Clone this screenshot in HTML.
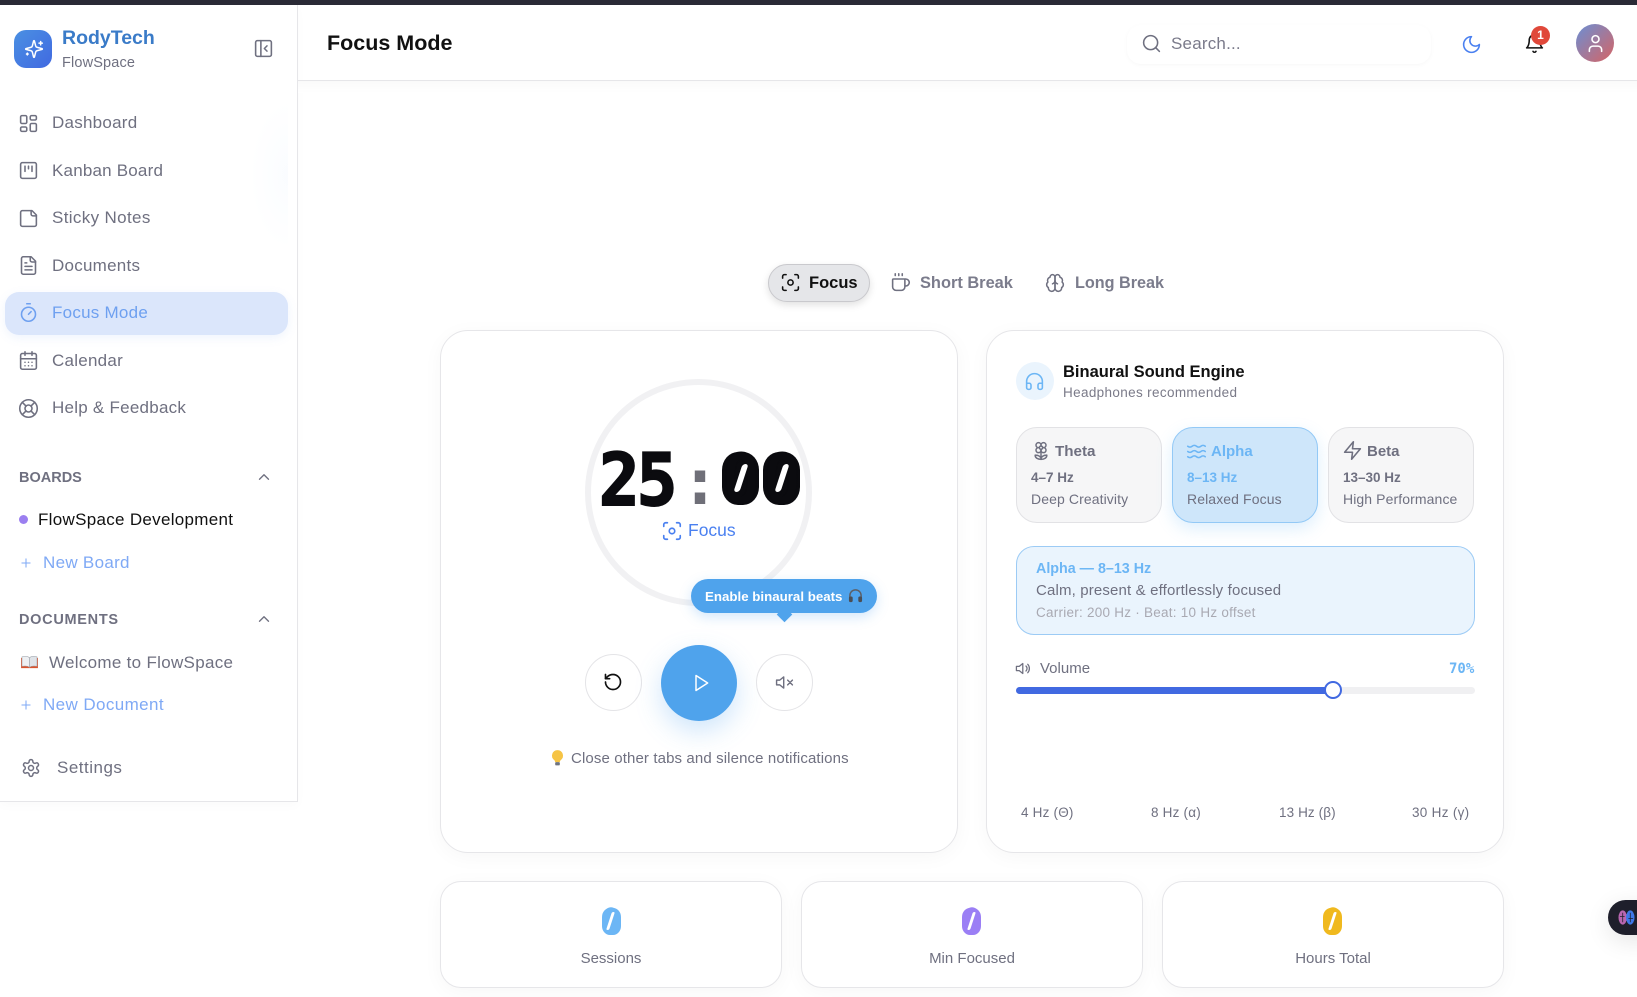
<!DOCTYPE html>
<html lang="en"><head><meta charset="utf-8"><title>Focus Mode</title>
<style>
*{box-sizing:border-box}
html,body{margin:0;padding:0;width:1637px;height:997px;overflow:hidden;background:#fff;font-family:"Liberation Sans",Arial,sans-serif}
.a,.t,svg.i{position:absolute}
.t{white-space:nowrap;line-height:20px;height:20px;color:#6f7080;margin-top:1px}
svg.i{fill:none;stroke:currentColor;stroke-width:1.8;stroke-linecap:round;stroke-linejoin:round;color:#6f7080}
.nav{font-size:17px;letter-spacing:.25px}
.sec{font-size:14.5px;font-weight:700;letter-spacing:.7px}
.card{position:absolute;background:#fff;border:1.5px solid #e6e6e9;box-shadow:0 4px 20px rgba(0,0,0,.035)}
.mode{position:absolute;top:427px;width:146px;height:96px;border-radius:21px;background:#f6f6f7;border:1.5px solid #e2e2e5}
.mono{font-family:"DejaVu Sans Mono","Liberation Mono",monospace;font-weight:700}
.c{text-align:center}
.sl{position:absolute;background:#fff;transform:skewX(-18deg)}
.z{position:absolute;top:452px;width:37px;height:53px;border-radius:16px/18px;background:#0b0b0f}
.sz{position:absolute;top:907.5px;width:19px;height:27px;border-radius:8px/9px}
.stat0{top:906px;width:342px;height:30px;line-height:30px;font-size:35px;transform:scaleX(.9)}
</style></head><body>
<div class="a" style="left:0;top:0;width:1637px;height:5px;background:#2a2a36"></div>

<!-- sidebar -->
<div class="a" style="left:0;top:5px;width:298px;height:797px;background:#fff;border-right:1.5px solid #e6e6e9;border-bottom:1.5px solid #e6e6e9;box-shadow:0 4px 10px rgba(0,0,0,.02)"></div>
<div class="a" style="left:250px;top:100px;width:38px;height:150px;background:radial-gradient(ellipse at 100% 50%,rgba(190,220,250,.08),rgba(190,220,250,0) 70%)"></div>
<div class="a" style="left:14px;top:30px;width:38px;height:38px;border-radius:12px;background:linear-gradient(135deg,#4a90e2,#4169e1)"></div>
<svg class="i" viewBox="0 0 24 24" style="left:24px;top:39px;width:20px;height:20px;color:#fff"><path d="M9.937 15.5A2 2 0 0 0 8.5 14.063l-6.135-1.582a.5.5 0 0 1 0-.962L8.5 9.936A2 2 0 0 0 9.937 8.5l1.582-6.135a.5.5 0 0 1 .963 0L14.063 8.5A2 2 0 0 0 15.5 9.937l6.135 1.581a.5.5 0 0 1 0 .964L15.5 14.063a2 2 0 0 0-1.437 1.437l-1.582 6.135a.5.5 0 0 1-.963 0zM20 3v4M22 5h-4M4 17v2M5 18H3"/></svg>
<div class="t" style="left:62px;top:27px;font-size:19.5px;font-weight:700;color:#3a7bc8">RodyTech</div>
<div class="t" style="left:62px;top:52px;font-size:14.5px;letter-spacing:.15px">FlowSpace</div>
<svg class="i" viewBox="0 0 24 24" style="left:253px;top:38px;width:21px;height:21px"><rect x="3" y="3" width="18" height="18" rx="2"/><path d="M9 3v18M16 15l-3-3 3-3"/></svg>

<svg class="i" viewBox="0 0 24 24" style="left:18px;top:113px;width:21px;height:21px"><rect x="3" y="3" width="7" height="9" rx="1.500"/><rect x="14" y="3" width="7" height="5" rx="1.500"/><rect x="14" y="12" width="7" height="9" rx="1.500"/><rect x="3" y="16" width="7" height="5" rx="1.500"/></svg>
<div class="t nav" style="left:52px;top:112px">Dashboard</div>
<svg class="i" viewBox="0 0 24 24" style="left:18px;top:160px;width:21px;height:21px"><rect x="3" y="3" width="18" height="18" rx="2"/><path d="M8 7v6M12 7v3M16 7v6"/></svg>
<div class="t nav" style="left:52px;top:160px;letter-spacing:.2px">Kanban Board</div>
<svg class="i" viewBox="0 0 24 24" style="left:18px;top:208px;width:21px;height:21px"><path d="M16 3H5a2 2 0 0 0-2 2v14a2 2 0 0 0 2 2h14a2 2 0 0 0 2-2V8Z"/><path d="M15 3v4a2 2 0 0 0 2 2h4"/></svg>
<div class="t nav" style="left:52px;top:207px;letter-spacing:.35px">Sticky Notes</div>
<svg class="i" viewBox="0 0 24 24" style="left:18px;top:255px;width:21px;height:21px"><path d="M15 2H6a2 2 0 0 0-2 2v16a2 2 0 0 0 2 2h12a2 2 0 0 0 2-2V7Z"/><path d="M14 2v4a2 2 0 0 0 2 2h4M10 9H8M16 13H8M16 17H8"/></svg>
<div class="t nav" style="left:52px;top:255px">Documents</div>
<div class="a" style="left:5px;top:292px;width:283px;height:43px;border-radius:14px;background:#dbe6fb;box-shadow:0 3px 10px rgba(100,150,240,.1)"></div>
<svg class="i" viewBox="0 0 24 24" style="left:18px;top:302px;width:21px;height:21px;color:#6ea0f0"><path d="M10 2h4M12 14l3-3"/><circle cx="12" cy="14" r="8"/></svg>
<div class="t nav" style="left:52px;top:302px;color:#6ea0f0">Focus Mode</div>
<svg class="i" viewBox="0 0 24 24" style="left:18px;top:350px;width:21px;height:21px"><path d="M8 2v4M16 2v4"/><rect x="3" y="4" width="18" height="18" rx="2"/><path d="M3 10h18M8 14h.01M12 14h.01M16 14h.01M8 18h.01M12 18h.01M16 18h.01"/></svg>
<div class="t nav" style="left:52px;top:350px">Calendar</div>
<svg class="i" viewBox="0 0 24 24" style="left:18px;top:398px;width:21px;height:21px"><circle cx="12" cy="12" r="10"/><path d="M4.93 4.93l4.24 4.24M14.83 9.17l4.24-4.24M14.83 14.83l4.24 4.24M9.17 14.83l-4.24 4.24"/><circle cx="12" cy="12" r="4"/></svg>
<div class="t nav" style="left:52px;top:397px">Help &amp; Feedback</div>

<div class="t sec" style="left:19px;top:467px;letter-spacing:0">BOARDS</div>
<svg class="i" viewBox="0 0 24 24" style="left:255px;top:468px;width:18px;height:18px"><path d="M18 15l-6-6-6 6"/></svg>
<div class="a" style="left:19px;top:515px;width:9px;height:9px;border-radius:50%;background:#9b7ff0"></div>
<div class="t nav" style="left:38px;top:509px;color:#111;letter-spacing:.3px">FlowSpace Development</div>
<svg class="i" viewBox="0 0 24 24" style="left:19px;top:556px;width:14px;height:14px;color:#7fa9f5"><path d="M5 12h14M12 5v14"/></svg>
<div class="t nav" style="left:43px;top:552px;color:#7fa9f5;letter-spacing:.3px">New Board</div>
<div class="t sec" style="left:19px;top:609px">DOCUMENTS</div>
<svg class="i" viewBox="0 0 24 24" style="left:255px;top:610px;width:18px;height:18px"><path d="M18 15l-6-6-6 6"/></svg>
<svg class="a" viewBox="0 0 20 16" style="left:20px;top:655px;width:19px;height:15px"><path d="M1 3h18v11H1z" fill="#d9542f"/><path d="M2 2c3-1 6-1 8 1v10c-2-1.500-5-1.500-8-1z" fill="#eef0f3" stroke="#9aa0a8" stroke-width=".6"/><path d="M18 2c-3-1-6-1-8 1v10c2-1.500 5-1.500 8-1z" fill="#dfe3e8" stroke="#9aa0a8" stroke-width=".6"/></svg>
<div class="t nav" style="left:49px;top:652px;letter-spacing:.3px">Welcome to FlowSpace</div>
<svg class="i" viewBox="0 0 24 24" style="left:19px;top:698px;width:14px;height:14px;color:#7fa9f5"><path d="M5 12h14M12 5v14"/></svg>
<div class="t nav" style="left:43px;top:694px;color:#7fa9f5;letter-spacing:.4px">New Document</div>
<svg class="i" viewBox="0 0 24 24" style="left:20.500px;top:757.500px;width:20px;height:20px"><path d="M12.22 2h-.44a2 2 0 0 0-2 2v.18a2 2 0 0 1-1 1.730l-.43.25a2 2 0 0 1-2 0l-.15-.08a2 2 0 0 0-2.730.73l-.22.38a2 2 0 0 0 .73 2.730l.15.1a2 2 0 0 1 1 1.720v.51a2 2 0 0 1-1 1.740l-.15.09a2 2 0 0 0-.73 2.730l.22.38a2 2 0 0 0 2.730.73l.15-.08a2 2 0 0 1 2 0l.43.25a2 2 0 0 1 1 1.730V20a2 2 0 0 0 2 2h.44a2 2 0 0 0 2-2v-.18a2 2 0 0 1 1-1.730l.43-.25a2 2 0 0 1 2 0l.15.08a2 2 0 0 0 2.730-.73l.22-.39a2 2 0 0 0-.73-2.730l-.15-.08a2 2 0 0 1-1-1.740v-.5a2 2 0 0 1 1-1.740l.15-.09a2 2 0 0 0 .73-2.730l-.22-.38a2 2 0 0 0-2.730-.73l-.15.08a2 2 0 0 1-2 0l-.43-.25a2 2 0 0 1-1-1.730V4a2 2 0 0 0-2-2z"/><circle cx="12" cy="12" r="3"/></svg>
<div class="t nav" style="left:57px;top:757px;letter-spacing:.5px">Settings</div>

<!-- header -->
<div class="a" style="left:298px;top:80px;width:1339px;height:1.500px;background:#e6e6e9"></div>
<div class="a" style="left:298px;top:81px;width:1339px;height:12px;background:linear-gradient(#fafafa,#fff)"></div>
<div class="t" style="left:327px;top:31.500px;font-size:21.5px;font-weight:700;color:#111">Focus Mode</div>
<div class="a" style="left:1127px;top:25px;width:304px;height:39px;border-radius:14px;background:#fff;box-shadow:0 1px 4px rgba(0,0,0,.035)"></div>
<svg class="i" viewBox="0 0 24 24" style="left:1140.500px;top:33px;width:21px;height:21px"><circle cx="11" cy="11" r="8"/><path d="M21 21l-4.300-4.300"/></svg>
<div class="t" style="left:1171px;top:33px;font-size:17px;color:#7a7a8a;letter-spacing:.2px">Search...</div>
<svg class="i" viewBox="0 0 24 24" style="left:1461px;top:33.500px;width:21px;height:21px;color:#4a80f0"><path d="M12 3a6 6 0 0 0 9 9 9 9 0 1 1-9-9Z"/></svg>
<svg class="i" viewBox="0 0 24 24" style="left:1523.500px;top:32.500px;width:21px;height:21px;color:#111"><path d="M6 8a6 6 0 0 1 12 0c0 7 3 9 3 9H3s3-2 3-9"/><path d="M10.300 21a1.940 1.940 0 0 0 3.400 0"/></svg>
<div class="a" style="left:1531px;top:26px;width:19px;height:19px;border-radius:50%;background:#e0483a;color:#fff;font-size:12px;font-weight:700;line-height:19px;text-align:center">1</div>
<div class="a" style="left:1576px;top:24px;width:38px;height:38px;border-radius:50%;background:linear-gradient(135deg,#6b8fd4,#d66464)"></div>
<svg class="i" viewBox="0 0 24 24" style="left:1585px;top:33px;width:21px;height:21px;color:#fff"><path d="M19 21v-2a4 4 0 0 0-4-4H9a4 4 0 0 0-4 4v2"/><circle cx="12" cy="7" r="4"/></svg>

<!-- tabs -->
<div class="a" style="left:768px;top:264px;width:102px;height:38px;border-radius:19px;background:#e5e6e9;border:1px solid #c9c9cd;box-shadow:0 3px 8px rgba(0,0,0,.12)"></div>
<svg class="i" viewBox="0 0 24 24" style="left:780px;top:272px;width:21px;height:21px;color:#111"><circle cx="12" cy="12" r="3"/><path d="M3 7V5a2 2 0 0 1 2-2h2M17 3h2a2 2 0 0 1 2 2v2M21 17v2a2 2 0 0 1-2 2h-2M7 21H5a2 2 0 0 1-2-2v-2"/></svg>
<div class="t" style="left:809px;top:272px;font-size:16.5px;font-weight:700;color:#111">Focus</div>
<svg class="i" viewBox="0 0 24 24" style="left:890px;top:272px;width:21px;height:21px"><path d="M10 2v2M14 2v2M16 8a1 1 0 0 1 1 1v8a4 4 0 0 1-4 4H7a4 4 0 0 1-4-4V9a1 1 0 0 1 1-1h14a4 4 0 1 1 0 8h-1M6 2v2"/></svg>
<div class="t" style="left:920px;top:272px;font-size:16.4px;font-weight:700;color:#7b7c8c">Short Break</div>
<svg class="i" viewBox="0 0 24 24" style="left:1045px;top:272.500px;width:20px;height:20px"><path d="M12 5a3 3 0 1 0-5.997.125 4 4 0 0 0-2.526 5.770 4 4 0 0 0 .556 6.588A4 4 0 1 0 12 18Z"/><path d="M12 5a3 3 0 1 1 5.997.125 4 4 0 0 1 2.526 5.770 4 4 0 0 1-.556 6.588A4 4 0 1 1 12 18Z"/><path d="M15 13a4.500 4.500 0 0 1-3-4 4.500 4.500 0 0 1-3 4"/></svg>
<div class="t" style="left:1075px;top:272px;font-size:16.2px;font-weight:700;color:#7b7c8c">Long Break</div>

<!-- left card -->
<div class="card" style="left:440px;top:330px;width:518px;height:523px;border-radius:28px"></div>
<div class="a" style="left:585px;top:379px;width:227px;height:227px;border-radius:50%;border:6px solid #f1f1f3"></div>
<div class="t mono" style="left:599px;top:449px;height:60px;line-height:60px;font-size:72px;color:#0b0b0f;letter-spacing:-3px;-webkit-text-stroke:2px #0b0b0f;transform:scaleX(.935);transform-origin:0 50%">25</div>
<div class="t mono c" style="left:680px;top:452px;width:40px;height:60px;line-height:60px;font-size:64px;color:#6f6f78">:</div>
<div class="z" style="left:722px"></div>
<div class="z" style="left:763px"></div>
<div class="t mono" style="left:721.500px;top:449px;height:60px;line-height:60px;font-size:69px;color:#0b0b0f;letter-spacing:3px;-webkit-text-stroke:1px #0b0b0f;transform:scaleX(.92);transform-origin:0 50%">00</div>
<div class="sl" style="left:737.500px;top:464px;width:5.500px;height:28px;border-radius:3px"></div>
<div class="sl" style="left:778.500px;top:464px;width:5.500px;height:28px;border-radius:3px"></div>
<svg class="i" viewBox="0 0 24 24" style="left:661px;top:520px;width:22px;height:22px;color:#4a80f0"><circle cx="12" cy="12" r="3"/><path d="M3 7V5a2 2 0 0 1 2-2h2M17 3h2a2 2 0 0 1 2 2v2M21 17v2a2 2 0 0 1-2 2h-2M7 21H5a2 2 0 0 1-2-2v-2"/></svg>
<div class="t" style="left:688px;top:519px;font-size:17.5px;color:#4a80f0">Focus</div>

<div class="a" style="left:691px;top:579px;width:186px;height:34px;border-radius:17px;background:#4fa3ec;box-shadow:0 4px 12px rgba(80,160,240,.25)"></div>
<div class="a" style="left:779px;top:609px;width:11px;height:11px;background:#4fa3ec;transform:rotate(45deg)"></div>
<div class="t" style="left:705px;top:586px;font-size:13.3px;font-weight:700;color:#fff">Enable binaural beats</div>
<svg class="a" viewBox="0 0 16 16" style="left:848px;top:588px;width:15px;height:15px"><path d="M2 10V8a6 6 0 0 1 12 0v2" fill="none" stroke="#5c6068" stroke-width="1.600"/><rect x="1" y="9" width="4" height="6" rx="1.500" fill="#4a4e56"/><rect x="11" y="9" width="4" height="6" rx="1.500" fill="#4a4e56"/></svg>

<div class="a" style="left:585px;top:654px;width:57px;height:57px;border-radius:50%;background:#fff;border:1.500px solid #e4e4e7"></div>
<svg class="i" viewBox="0 0 24 24" style="left:603px;top:672px;width:20px;height:20px;color:#111;stroke-width:2"><path d="M3 12a9 9 0 1 0 9-9 9.750 9.750 0 0 0-6.740 2.740L3 8"/><path d="M3 3v5h5"/></svg>
<div class="a" style="left:661px;top:645px;width:76px;height:76px;border-radius:50%;background:#4fa3ec;box-shadow:0 10px 26px rgba(80,160,240,.28)"></div>
<svg class="i" viewBox="0 0 24 24" style="left:691px;top:672.500px;width:20px;height:20px;color:#fff"><path d="M6 3l14 9-14 9z"/></svg>
<div class="a" style="left:756px;top:654px;width:57px;height:57px;border-radius:50%;background:#fff;border:1.500px solid #e4e4e7"></div>
<svg class="i" viewBox="0 0 24 24" style="left:775px;top:673px;width:19px;height:19px"><path d="M11 5L6 9H2v6h4l5 4zM22 9l-6 6M16 9l6 6"/></svg>
<svg class="a" viewBox="0 0 14 18" style="left:551px;top:749px;width:13px;height:17px"><path d="M7 1a6 6 0 0 0-3.500 10.800c.6.5.9 1.200.9 2.200h5.200c0-1 .3-1.700.9-2.200A6 6 0 0 0 7 1z" fill="#f6c445"/><rect x="4.500" y="14" width="5" height="3.500" rx="1" fill="#6e7480"/></svg>
<div class="t" style="left:571px;top:748px;font-size:15px;letter-spacing:.12px">Close other tabs and silence notifications</div>

<!-- right card -->
<div class="card" style="left:986px;top:330px;width:518px;height:523px;border-radius:28px"></div>
<div class="a" style="left:1016px;top:362px;width:38px;height:38px;border-radius:50%;background:#eaf4fd"></div>
<svg class="i" viewBox="0 0 24 24" style="left:1024px;top:371px;width:21px;height:21px;color:#6cb6f5"><path d="M3 14h3a2 2 0 0 1 2 2v3a2 2 0 0 1-2 2H5a2 2 0 0 1-2-2v-7a9 9 0 0 1 18 0v7a2 2 0 0 1-2 2h-1a2 2 0 0 1-2-2v-3a2 2 0 0 1 2-2h3"/></svg>
<div class="t" style="left:1063px;top:361px;font-size:16.5px;font-weight:700;color:#111">Binaural Sound Engine</div>
<div class="t" style="left:1063px;top:382px;font-size:13.5px;letter-spacing:.35px;color:#7a7a88">Headphones recommended</div>

<div class="mode" style="left:1016px"></div>
<div class="mode" style="left:1172px;background:#cee6fa;border-color:#93c9f6;box-shadow:0 6px 16px rgba(100,180,245,.22)"></div>
<div class="mode" style="left:1328px"></div>
<svg class="i" viewBox="0 0 24 24" style="left:1030.500px;top:441px;width:20px;height:20px"><path d="M12 5a3 3 0 1 1 3 3m-3-3a3 3 0 1 0-3 3m3-3v1M9 8a3 3 0 1 0 3 3M9 8h1m5 0a3 3 0 1 1-3 3m3-3h-1m-2 3v-1"/><circle cx="12" cy="8" r="2"/><path d="M12 10v12M12 22c4.200 0 7-1.667 7-5-4.200 0-7 1.667-7 5ZM12 22c-4.200 0-7-1.667-7-5 4.200 0 7 1.667 7 5Z"/></svg>
<div class="t" style="left:1055px;top:441px;font-size:15.2px;font-weight:700">Theta</div>
<div class="t" style="left:1031px;top:467px;font-size:13.5px;font-weight:700">4–7 Hz</div>
<div class="t" style="left:1031px;top:488px;font-size:14px;letter-spacing:.1px">Deep Creativity</div>
<svg class="i" viewBox="0 0 24 24" style="left:1186px;top:440.500px;width:21px;height:21px;color:#6cb6f5"><path d="M2 6c.6.5 1.200 1 2.500 1C7 7 7 5 9.500 5c2.600 0 2.400 2 5 2 2.500 0 2.500-2 5-2 1.300 0 1.900.5 2.500 1M2 12c.6.5 1.200 1 2.500 1 2.500 0 2.500-2 5-2 2.600 0 2.400 2 5 2 2.500 0 2.500-2 5-2 1.300 0 1.900.5 2.500 1M2 18c.6.5 1.200 1 2.500 1 2.500 0 2.500-2 5-2 2.600 0 2.400 2 5 2 2.500 0 2.500-2 5-2 1.300 0 1.900.5 2.500 1"/></svg>
<div class="t" style="left:1211px;top:441px;font-size:15px;font-weight:700;color:#6cb6f5">Alpha</div>
<div class="t" style="left:1187px;top:467px;font-size:13.5px;font-weight:700;color:#6cb6f5">8–13 Hz</div>
<div class="t" style="left:1187px;top:488px;font-size:14px;letter-spacing:.1px">Relaxed Focus</div>
<svg class="i" viewBox="0 0 24 24" style="left:1341.500px;top:440px;width:21px;height:21px"><path d="M13 2L3 14h9l-1 8 10-12h-9l1-8z"/></svg>
<div class="t" style="left:1367px;top:441px;font-size:15px;font-weight:700">Beta</div>
<div class="t" style="left:1343px;top:467px;font-size:13.5px;font-weight:700">13–30 Hz</div>
<div class="t" style="left:1343px;top:488px;font-size:14px;letter-spacing:.1px">High Performance</div>

<div class="a" style="left:1016px;top:546px;width:459px;height:89px;border-radius:18px;background:#eaf4fd;border:1.500px solid #9ccbf5"></div>
<div class="t" style="left:1036px;top:558px;font-size:14.3px;font-weight:700;color:#6cb6f5">Alpha — 8–13 Hz</div>
<div class="t" style="left:1036px;top:580px;font-size:15px;letter-spacing:.15px">Calm, present &amp; effortlessly focused</div>
<div class="t" style="left:1036px;top:602px;font-size:13.5px;letter-spacing:.25px;color:#a9a9b2">Carrier: 200 Hz · Beat: 10 Hz offset</div>

<svg class="i" viewBox="0 0 24 24" style="left:1015px;top:660px;width:17px;height:17px"><path d="M11 5L6 9H2v6h4l5 4zM15.540 8.460a5 5 0 0 1 0 7.070M18 6a9 9 0 0 1 0 12"/></svg>
<div class="t" style="left:1040px;top:658px;font-size:15px">Volume</div>
<div class="t mono" style="left:1449px;top:658px;font-size:14px;color:#6cb6f5">70%</div>
<div class="a" style="left:1016px;top:687px;width:459px;height:7px;border-radius:4px;background:#f0f0f2"></div>
<div class="a" style="left:1016px;top:687px;width:317px;height:7px;border-radius:4px;background:#4169e1"></div>
<div class="a" style="left:1324px;top:681px;width:18px;height:18px;border-radius:50%;background:#fff;border:2px solid #4169e1"></div>

<div class="t" style="left:1021px;top:802px;font-size:13.5px;letter-spacing:.2px">4 Hz (Θ)</div>
<div class="t" style="left:1151px;top:802px;font-size:13.5px;letter-spacing:.2px">8 Hz (α)</div>
<div class="t" style="left:1279px;top:802px;font-size:13.5px;letter-spacing:.1px">13 Hz (β)</div>
<div class="t" style="left:1412px;top:802px;font-size:13.5px;letter-spacing:.3px">30 Hz (γ)</div>

<!-- stats -->
<div class="card" style="left:440px;top:881px;width:342px;height:107px;border-radius:21px"></div>
<div class="card" style="left:801px;top:881px;width:342px;height:107px;border-radius:21px"></div>
<div class="card" style="left:1162px;top:881px;width:342px;height:107px;border-radius:21px"></div>
<div class="sz" style="left:601.500px;background:#6cb6f5"></div>
<div class="sz" style="left:962px;background:#9b7ff5"></div>
<div class="sz" style="left:1323px;background:#f0b91e"></div>
<div class="t mono c stat0" style="left:440px;color:#6cb6f5">0</div>
<div class="t mono c stat0" style="left:801px;color:#9b7ff5">0</div>
<div class="t mono c stat0" style="left:1162px;color:#f0b91e">0</div>
<div class="sl" style="left:609.300px;top:912px;width:3px;height:18px;border-radius:2px"></div>
<div class="sl" style="left:969.800px;top:912px;width:3px;height:18px;border-radius:2px"></div>
<div class="sl" style="left:1330.800px;top:912px;width:3px;height:18px;border-radius:2px"></div>
<div class="t c" style="left:440px;top:948px;width:342px;font-size:15px">Sessions</div>
<div class="t c" style="left:801px;top:948px;width:342px;font-size:15px">Min Focused</div>
<div class="t c" style="left:1162px;top:948px;width:342px;font-size:15px">Hours Total</div>

<!-- floating -->
<div class="a" style="left:1608px;top:900px;width:60px;height:35px;border-radius:18px;background:#1e1f2b;box-shadow:0 6px 24px rgba(0,0,0,.1)"></div>
<svg class="a" viewBox="0 0 18 18" style="left:1618px;top:909px;width:17px;height:17px"><ellipse cx="5" cy="9" rx="4.500" ry="7.500" fill="#b866b0"/><ellipse cx="13" cy="9" rx="4.500" ry="7.500" fill="#3f78e8"/><path d="M5 4v10M13 4v10M2 8h5M11 10h5" stroke="#1e1f2b" stroke-width=".8" fill="none"/></svg>
</body></html>
